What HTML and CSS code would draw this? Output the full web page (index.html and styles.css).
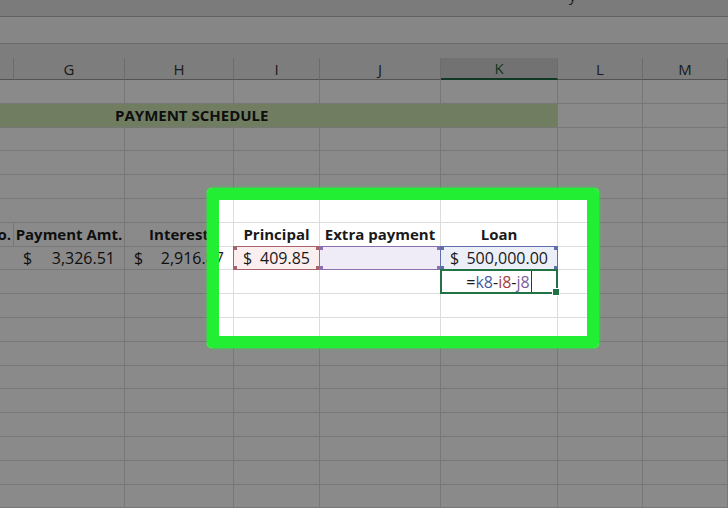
FILE: index.html
```html
<!DOCTYPE html>
<html lang="en">
<head>
  <meta charset="UTF-8">
  <meta name="viewport" content="width=device-width, initial-scale=1.0">
  <title>Payment Schedule - Excel</title>
  <link rel="stylesheet" href="styles.css">
</head>
<body>
  <div class="titlebar"><span class="title-text">y</span></div>
  <div class="formula-bar"></div>
  <div class="sheet-top"></div>

  <div class="sheet">
    <!-- column headers -->
    <div class="col-head"></div>
    <div class="col-head">G</div>
    <div class="col-head">H</div>
    <div class="col-head">I</div>
    <div class="col-head">J</div>
    <div class="col-head selected">K</div>
    <div class="col-head">L</div>
    <div class="col-head">M</div>

    <!-- row 1 -->
    <div class="cell"></div><div class="cell"></div><div class="cell"></div><div class="cell"></div>
    <div class="cell"></div><div class="cell"></div><div class="cell"></div><div class="cell"></div>

    <!-- row 2 -->
    <div class="cell band">PAYMENT SCHEDULE</div>
    <div class="cell"></div><div class="cell"></div>

    <!-- rows 3-6 -->
    <div class="cell"></div><div class="cell"></div><div class="cell"></div><div class="cell"></div>
    <div class="cell"></div><div class="cell"></div><div class="cell"></div><div class="cell"></div>
    <div class="cell"></div><div class="cell"></div><div class="cell"></div><div class="cell"></div>
    <div class="cell"></div><div class="cell"></div><div class="cell"></div><div class="cell"></div>
    <div class="cell"></div><div class="cell"></div><div class="cell"></div><div class="cell"></div>
    <div class="cell"></div><div class="cell"></div><div class="cell"></div><div class="cell"></div>
    <div class="cell"></div><div class="cell"></div><div class="cell"></div><div class="cell"></div>
    <div class="cell"></div><div class="cell"></div><div class="cell"></div><div class="cell"></div>

    <!-- row 7: headings -->
    <div class="cell bold right">No.</div>
    <div class="cell bold center">Payment Amt.</div>
    <div class="cell bold center">Interest</div>
    <div class="cell bold center">Principal</div>
    <div class="cell bold center">Extra payment</div>
    <div class="cell bold center">Loan</div>
    <div class="cell"></div>
    <div class="cell"></div>

    <!-- row 8: values -->
    <div class="cell"></div>
    <div class="cell money"><span>$</span><span>3,326.51</span></div>
    <div class="cell money"><span>$</span><span>2,916.87</span></div>
    <div class="cell money ref ref-red"><span>$</span><span>409.85</span></div>
    <div class="cell ref ref-purple"></div>
    <div class="cell money ref ref-blue"><span>$</span><span>500,000.00</span></div>
    <div class="cell"></div>
    <div class="cell"></div>

    <!-- row 9: formula being typed -->
    <div class="cell"></div><div class="cell"></div><div class="cell"></div><div class="cell"></div>
    <div class="cell"></div>
    <div class="cell active">
      <span>=<span class="f-blue">k8</span>-<span class="f-red">i8</span>-<span class="f-purple">j8</span></span>
      <span class="cursor"></span>
    </div>
    <div class="cell"></div><div class="cell"></div>

    <!-- rows 10-18 -->
    <div class="cell"></div><div class="cell"></div><div class="cell"></div><div class="cell"></div>
    <div class="cell"></div><div class="cell"></div><div class="cell"></div><div class="cell"></div>
    <div class="cell"></div><div class="cell"></div><div class="cell"></div><div class="cell"></div>
    <div class="cell"></div><div class="cell"></div><div class="cell"></div><div class="cell"></div>
    <div class="cell"></div><div class="cell"></div><div class="cell"></div><div class="cell"></div>
    <div class="cell"></div><div class="cell"></div><div class="cell"></div><div class="cell"></div>
    <div class="cell"></div><div class="cell"></div><div class="cell"></div><div class="cell"></div>
    <div class="cell"></div><div class="cell"></div><div class="cell"></div><div class="cell"></div>
    <div class="cell"></div><div class="cell"></div><div class="cell"></div><div class="cell"></div>
    <div class="cell"></div><div class="cell"></div><div class="cell"></div><div class="cell"></div>
    <div class="cell"></div><div class="cell"></div><div class="cell"></div><div class="cell"></div>
    <div class="cell"></div><div class="cell"></div><div class="cell"></div><div class="cell"></div>
    <div class="cell"></div><div class="cell"></div><div class="cell"></div><div class="cell"></div>
    <div class="cell"></div><div class="cell"></div><div class="cell"></div><div class="cell"></div>
    <div class="cell"></div><div class="cell"></div><div class="cell"></div><div class="cell"></div>
    <div class="cell"></div><div class="cell"></div><div class="cell"></div><div class="cell"></div>
    <div class="cell"></div><div class="cell"></div><div class="cell"></div><div class="cell"></div>
    <div class="cell"></div><div class="cell"></div><div class="cell"></div><div class="cell"></div>
  </div>

  <!-- green highlight, dims everything around it -->
  <div class="focus-box"></div>
</body>
</html>
```

FILE: styles.css
```css
/* Basic styling */
* {
  box-sizing: border-box;
}

body {
  margin: 0;
  width: 728px;
  height: 508px;
  overflow: hidden;
  position: relative;
  background-color: #fff;
  font-family: "Open Sans", Arial, sans-serif;
  color: #1a1a1a;
}

/* window chrome above the grid */
.titlebar {
  height: 17px;
  background-color: #e4e4e4;
  border-bottom: 1px solid #b4b4b4;
  overflow: hidden;
}

.title-text {
  display: block;
  margin-top: -11px;
  padding-left: 569px;
  font-size: 14px;
  line-height: 14px;
  color: #333;
}

.formula-bar {
  height: 27px;
  background-color: #f8f8f8;
  border-bottom: 1px solid #c2c2c2;
}

.sheet-top {
  height: 14px;
  background-color: #e8e8e8;
}

/* the grid */
.sheet {
  display: grid;
  grid-template-columns: 14px 111px 109px 86px 121px 117px 85px 85px;
  grid-template-rows: 22px;
  grid-auto-rows: 23.8px;
}

.col-head {
  display: flex;
  align-items: center;
  justify-content: center;
  background-color: #e8e8e8;
  border-right: 1px solid #c8c8c8;
  border-bottom: 1px solid #9a9a9a;
  font-size: 15px;
  color: #333;
}

.col-head.selected {
  background-color: #d2d2d2;
  color: #1d6a3f;
  border-bottom: 2px solid #1d6a3f;
}

.cell {
  display: flex;
  align-items: center;
  min-width: 0;
  padding: 0 9px;
  background-color: #fff;
  border-right: 1px solid #dcdcdc;
  border-bottom: 1px solid #dcdcdc;
  font-size: 16px;
  white-space: nowrap;
}

.bold {
  font-weight: 700;
  font-size: 15px;
}

.center {
  justify-content: center;
}

.right {
  justify-content: flex-end;
  padding: 0 2px 0 0;
}

.money {
  justify-content: space-between;
}

.band {
  grid-column: 1 / 7;
  padding-left: 115px;
  background-color: #cfe8b4;
  font-size: 15px;
  font-weight: 700;
}

/* formula reference highlights */
.ref {
  margin: -1px 0 0 -1px;
  border: 1px solid var(--ref);
  background:
    linear-gradient(var(--ref), var(--ref)) left top / 3px 3px no-repeat,
    linear-gradient(var(--ref), var(--ref)) right top / 3px 3px no-repeat,
    linear-gradient(var(--ref), var(--ref)) left bottom / 3px 3px no-repeat,
    linear-gradient(var(--ref), var(--ref)) right bottom / 3px 3px no-repeat,
    var(--fill);
}

.ref-red {
  --ref: #a8626c;
  --fill: #fbeeee;
}

.ref-purple {
  --ref: #8a70ac;
  --fill: #efebf7;
}

.ref-blue {
  --ref: #5d70ac;
  --fill: #eceff8;
}

.active {
  position: relative;
  margin: -1px 0 0 -1px;
  padding: 0 4px;
  justify-content: center;
  border: 2px solid #217346;
}

.active::after {
  content: "";
  position: absolute;
  right: -4px;
  bottom: -4px;
  width: 6px;
  height: 6px;
  background-color: #217346;
  border: 1px solid #fff;
}

.f-blue {
  color: #3f5aa3;
}

.f-red {
  color: #a83a3a;
}

.f-purple {
  color: #7a5c9c;
}

.cursor {
  align-self: stretch;
  width: 1px;
  margin-left: 1px;
  background-color: #333;
}

/* the green box; its shadow greys out the rest of the page */
.focus-box {
  position: absolute;
  left: 207px;
  top: 188px;
  width: 392px;
  height: 160px;
  border: 12px solid #22ee33;
  border-radius: 5px;
  box-shadow: 0 0 2px 1px rgba(34, 238, 51, 0.6), 0 0 0 1200px rgba(0, 0, 0, 0.46);
  z-index: 2;
}
```
